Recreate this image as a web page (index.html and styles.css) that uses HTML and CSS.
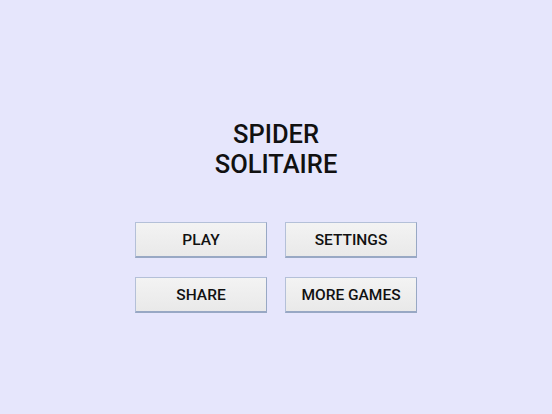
FILE: index.html
```html
<!DOCTYPE html>
<html>
<head>
<meta charset="utf-8">
<link rel="stylesheet" href="styles.css">
</head>
<body>
<main class="menu">
  <h1 class="title">SPIDER<br>SOLITAIRE</h1>
  <div class="buttons">
    <button class="btn">PLAY</button>
    <button class="btn">SETTINGS</button>
    <button class="btn">SHARE</button>
    <button class="btn">MORE GAMES</button>
  </div>
</main>
</body>
</html>
```

FILE: styles.css
```css
html, body {
  margin: 0;
  padding: 0;
  background: #e6e6fc;
  width: 552px;
  height: 414px;
  overflow: hidden;
}

.menu {
  display: flex;
  flex-direction: column;
  align-items: center;
  padding-top: 119px;
  font-family: Roboto, "Liberation Sans", sans-serif;
  color: #111;
}

.title {
  margin: 0;
  font-size: 25.5px;
  font-weight: 500;
  line-height: 30px;
  text-align: center;
}

.buttons {
  margin-top: 43px;
  display: grid;
  grid-template-columns: 132px 132px;
  grid-auto-rows: 36px;
  column-gap: 18px;
  row-gap: 19px;
}

.btn {
  box-sizing: border-box;
  margin: 0;
  padding: 0;
  font-family: Roboto, "Liberation Sans", sans-serif;
  font-size: 15.5px;
  font-weight: 500;
  color: #111;
  background: linear-gradient(#f3f3f3, #e9e9e9);
  border-top: 1px solid #b4c0d8;
  border-left: 1px solid #b4c0d8;
  border-right: 1px solid #98a8c4;
  border-bottom: 2px solid #98a8c4;
  border-radius: 0;
}
```
